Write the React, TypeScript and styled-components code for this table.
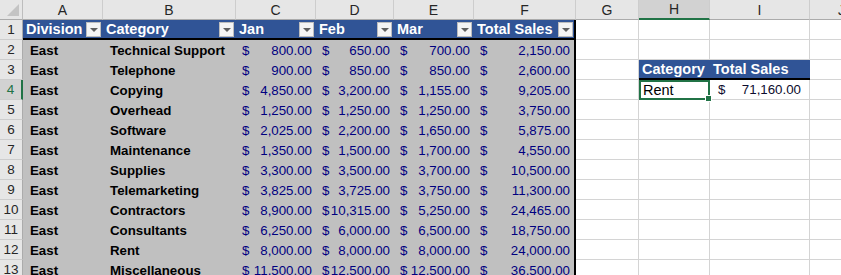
import React from "react";
import styled, { createGlobalStyle, css } from "styled-components";

type Row = [string, number, number, number, number];

const rows: Row[] = [
  ["Technical Support", 800, 650, 700, 2150],
  ["Telephone", 900, 850, 850, 2600],
  ["Copying", 4850, 3200, 1155, 9205],
  ["Overhead", 1250, 1250, 1250, 3750],
  ["Software", 2025, 2200, 1650, 5875],
  ["Maintenance", 1350, 1500, 1700, 4550],
  ["Supplies", 3300, 3500, 3700, 10500],
  ["Telemarketing", 3825, 3725, 3750, 11300],
  ["Contractors", 8900, 10315, 5250, 24465],
  ["Consultants", 6250, 6000, 6500, 18750],
  ["Rent", 8000, 8000, 8000, 24000],
  ["Miscellaneous", 11500, 12500, 12500, 36500],
];

const letters = ["A", "B", "C", "D", "E", "F", "G", "H", "I", "J"];
const headers = ["Division", "Category", "Jan", "Feb", "Mar", "Total Sales"];

const fmt = (n: number) =>
  n.toLocaleString("en-US", { minimumFractionDigits: 2, maximumFractionDigits: 2 });

const App = () => (
  <>
    <GlobalStyle />
    <Sheet>
      <Corner />
      {letters.map((l) => (
        <ColHead key={l} $active={l === "H"}>
          {l}
        </ColHead>
      ))}

      {/* row 1: table header */}
      <RowHead>1</RowHead>
      {headers.map((h, i) => (
        <HeadCell key={h} $last={i === headers.length - 1}>
          <HeadText>{h}</HeadText>
          <Filter />
        </HeadCell>
      ))}
      <Cell />
      <Cell />
      <Cell />
      <Cell />

      {rows.map((r, idx) => {
        const n = idx + 2;
        return (
          <React.Fragment key={n}>
            <RowHead $active={n === 4}>{n}</RowHead>
            <DataCell>East</DataCell>
            <DataCell>{r[0]}</DataCell>
            {r.slice(1).map((v, j) => (
              <MoneyCell key={j} $last={j === 3}>
                <span>$</span>
                <span>{fmt(v as number)}</span>
              </MoneyCell>
            ))}
            <Cell />
            {n === 3 ? (
              <>
                <SideHead>Category</SideHead>
                <SideHead>Total Sales</SideHead>
              </>
            ) : n === 4 ? (
              <>
                <Cell $selected>
                  Rent
                  <Handle />
                </Cell>
                <SideMoney>
                  <span>$</span>
                  <span>71,160.00</span>
                </SideMoney>
              </>
            ) : (
              <>
                <Cell />
                <Cell />
              </>
            )}
            <Cell />
          </React.Fragment>
        );
      })}
    </Sheet>
  </>
);

export default App;

const GlobalStyle = createGlobalStyle`
  html, body {
    margin: 0;
    overflow: hidden;
    background: #fff;
  }
  body {
    font-family: "Liberation Sans", Arial, sans-serif;
  }
`;

const Sheet = styled.div`
  display: grid;
  grid-template-columns: 23px 80px 133px 80px 78px 80px 102px 63px 71px 100px 64px;
  grid-auto-rows: 20px;
  width: 874px;
`;

const headBase = css`
  box-sizing: border-box;
  background: #e6e6e6;
  color: #262626;
  font-size: 14px;
  display: flex;
  align-items: center;
  justify-content: center;
`;

const Corner = styled.div`
  ${headBase};
  position: relative;
  border-right: 1px solid #bdbdbd;
  border-bottom: 1px solid #ababab;

  &::after {
    content: "";
    position: absolute;
    right: 3px;
    bottom: 3px;
    border-left: 12px solid transparent;
    border-bottom: 12px solid #c4c4c4;
  }
`;

const ColHead = styled.div<{ $active?: boolean }>`
  ${headBase};
  border-right: 1px solid #cdcdcd;
  border-bottom: ${(p) => (p.$active ? "2px solid #217346" : "1px solid #ababab")};
  background: ${(p) => (p.$active ? "#d2d2d2" : "#e6e6e6")};
`;

const RowHead = styled.div<{ $active?: boolean }>`
  ${headBase};
  font-size: 13.5px;
  border-bottom: 1px solid #cdcdcd;
  border-right: ${(p) => (p.$active ? "2px solid #217346" : "1px solid #ababab")};
  background: ${(p) => (p.$active ? "#d2d2d2" : "#e6e6e6")};
  color: ${(p) => (p.$active ? "#217346" : "#262626")};
`;

const Cell = styled.div<{ $selected?: boolean }>`
  box-sizing: border-box;
  position: relative;
  display: flex;
  align-items: center;
  padding-left: 3px;
  font-size: 14.5px;
  color: #000;
  border-right: 1px solid #d4d4d4;
  border-bottom: 1px solid #d4d4d4;

  ${(p) =>
    p.$selected &&
    css`
      border: 2px solid #217346;
      padding-left: 2px;
    `}
`;

const Handle = styled.span`
  position: absolute;
  right: -4px;
  bottom: -4px;
  width: 5px;
  height: 5px;
  background: #217346;
  border: 1px solid #fff;
  z-index: 2;
`;

const HeadCell = styled.div<{ $last?: boolean }>`
  box-sizing: border-box;
  display: flex;
  align-items: center;
  gap: 2px;
  padding: 0 2px 0 3px;
  background: #305496;
  border-bottom: 2px solid #000;
  ${(p) => p.$last && "border-right: 2px solid #000; padding-right: 1px;"}
  overflow: hidden;
`;

const HeadText = styled.span`
  flex: 1;
  color: #fff;
  font-weight: bold;
  font-size: 14.5px;
  white-space: nowrap;
  overflow: hidden;
`;

const Filter = styled.span`
  position: relative;
  flex: none;
  width: 15px;
  height: 15px;
  box-sizing: border-box;
  background: #f4f4f4;
  border: 1px solid #bdbdbd;

  &::after {
    content: "";
    position: absolute;
    left: 3px;
    top: 5px;
    border-left: 4px solid transparent;
    border-right: 4px solid transparent;
    border-top: 4px solid #5f5f5f;
  }
`;

const DataCell = styled.div`
  box-sizing: border-box;
  display: flex;
  align-items: center;
  padding-left: 7px;
  background: #c0c0c0;
  color: #000;
  font-weight: bold;
  font-size: 13.3px;
  white-space: nowrap;
`;

const MoneyCell = styled.div<{ $last?: boolean }>`
  box-sizing: border-box;
  display: flex;
  align-items: center;
  justify-content: space-between;
  padding: 0 4px 0 6px;
  background: #c0c0c0;
  color: #000080;
  font-size: 13.3px;
  white-space: nowrap;
  ${(p) => p.$last && "border-right: 2px solid #000;"}
`;

const SideHead = styled.div`
  box-sizing: border-box;
  display: flex;
  align-items: center;
  padding-left: 3px;
  background: #305496;
  color: #fff;
  font-weight: bold;
  font-size: 14.5px;
  white-space: nowrap;
  border-bottom: 2px solid #000;
`;

const SideMoney = styled.div`
  box-sizing: border-box;
  display: flex;
  align-items: center;
  justify-content: space-between;
  padding: 0 8px 0 8px;
  font-size: 13.3px;
  color: #0d0d2e;
  border-right: 1px solid #d4d4d4;
  border-bottom: 1px solid #d4d4d4;
`;
